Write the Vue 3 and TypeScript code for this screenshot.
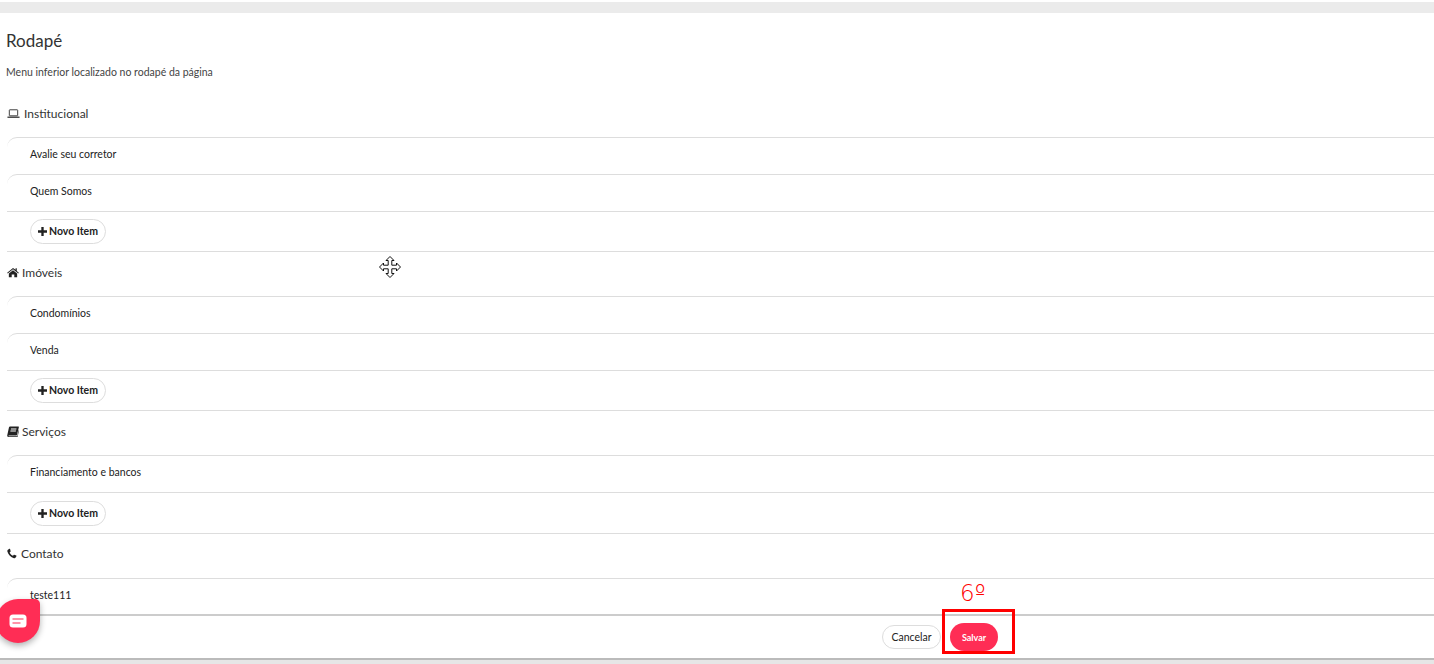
<script setup lang="ts">
interface FooterSection {
  title: string
  icon: 'laptop' | 'home' | 'book' | 'phone'
  items: string[]
  hasButton: boolean
}

const sections: FooterSection[] = [
  { title: 'Institucional', icon: 'laptop', items: ['Avalie seu corretor', 'Quem Somos'], hasButton: true },
  { title: 'Imóveis', icon: 'home', items: ['Condomínios', 'Venda'], hasButton: true },
  { title: 'Serviços', icon: 'book', items: ['Financiamento e bancos'], hasButton: true },
  { title: 'Contato', icon: 'phone', items: ['teste111'], hasButton: false },
]
</script>

<template>
  <div class="page">
    <div class="top-strip"></div>
    <main class="content">
      <h2 class="title">Rodapé</h2>
      <p class="subtitle">Menu inferior localizado no rodapé da página</p>

      <section v-for="section in sections" :key="section.title" class="section">
        <h3 class="section-title">
          <svg v-if="section.icon === 'laptop'" class="icon laptop" viewBox="0 0 14 11" fill="none" stroke="#333" stroke-width="1">
            <rect x="2.5" y="1.5" width="9" height="6.5" rx="0.5" />
            <path d="M0.5 9.5h13" stroke-width="1.4" />
          </svg>
          <svg v-else-if="section.icon === 'home'" class="icon" viewBox="0 0 13 11" fill="#222">
            <path d="M6.5 0.6 0.2 5.8l0.6 0.7L6.5 1.9l5.7 4.6 0.6-0.7-2.2-1.8V1H9.3v1.4z" />
            <path d="M6.5 3 2 6.6V10.6h3.1V7.6h2.8v3H11V6.6z" />
          </svg>
          <svg v-else-if="section.icon === 'book'" class="icon" viewBox="0 0 12 11" fill="#222">
            <path d="M3 0.4h8.4c.4 0 .6.3.5.7L10 9c-.1.3-.3.5-.7.5H2.2c-.6 0-.9.4-.6.7h8.7l1.2-6 .5.3-1.4 6.4H1.5C.5 10.9 0 10 .3 8.9L2 1.2C2.2.7 2.5.4 3 .4zM4 2.6l-.2.8h5.5l.2-.8zM3.5 4.6l-.2.8h5.5l.2-.8z" fill-rule="evenodd" />
          </svg>
          <svg v-else class="icon phone" viewBox="0 0 11 11" fill="#222">
            <path d="M2.7 0.4 1 1.3C.4 1.7.2 2.4.4 3.2c1 3.4 3.8 6.4 7.3 7.4.7.2 1.4 0 1.8-.6l.9-1.5c.1-.3 0-.6-.2-.7L8 7c-.3-.1-.5 0-.7.2l-.7.9c-1.7-.7-3-2-3.7-3.7l.9-.8c.2-.2.3-.4.2-.7L3.4.6C3.3.4 3 .3 2.7.4z" />
          </svg>
          <span>{{ section.title }}</span>
        </h3>
        <ul class="items">
          <li v-for="item in section.items" :key="item" class="item">{{ item }}</li>
        </ul>
        <div v-if="section.hasButton" class="new-row">
          <button class="pill new-item" type="button">
            <svg class="plus" viewBox="0 0 10 10" fill="#222"><path d="M3.7 0h2.6v3.7H10v2.6H6.3V10H3.7V6.300H0V3.700h3.700z" /></svg>
            Novo Item
          </button>
        </div>
      </section>
    </main>

    <footer class="actions">
      <button class="pill cancel" type="button">Cancelar</button>
      <button class="pill save" type="button">Salvar</button>
    </footer>
    <div class="bottom-strip"></div>

    <button class="chat" type="button" aria-label="Chat">
      <svg viewBox="0 0 18 14" width="18" height="14">
        <rect x="0.5" y="0.5" width="17" height="13" rx="3.5" fill="#fff" />
        <path d="M3.5 5h11M3.5 9h8" stroke="#ff2d55" stroke-width="1.2" />
      </svg>
    </button>

    <div class="mark"></div>
    <span class="mark-label">6º</span>

    <svg class="cursor" viewBox="0 0 24 24" width="24" height="24" fill="#fff" stroke="#111" stroke-width="1">
      <path d="M12 1.5 16 5.5H13.8V10.2H18.5V8L22.5 12 18.5 16V13.8H13.8V18.5H16L12 22.5 8 18.5H10.2V13.8H5.5V16L1.5 12 5.5 8V10.2H10.2V5.5H8Z" />
    </svg>
  </div>
</template>

<style scoped>
.page {
  position: relative;
  height: 664px;
  display: flex;
  flex-direction: column;
  overflow: hidden;
  background: #fff;
  color: #333;
  font-family: Lato, "Liberation Sans", sans-serif;
}

.top-strip {
  flex: none;
  height: 11px;
  margin-top: 2px;
  background: #ebebeb;
}

.content {
  flex: 1;
  min-height: 0;
  overflow: hidden;
  padding-left: 7px;
}

.title {
  margin: 18px 0 0 -1px;
  font-size: 17px;
  line-height: 20px;
  font-weight: 400;
  color: #333;
}

.subtitle {
  margin: 13px 0 0 -1px;
  font-size: 10.5px;
  line-height: 16px;
  color: #444;
}

.section {
  border-bottom: 1px solid #ddd;
}

.section:first-of-type {
  margin-top: 13px;
}

.section:last-of-type {
  border-bottom: 0;
}

.section-title {
  display: flex;
  align-items: center;
  gap: 4px;
  height: 44px;
  box-sizing: border-box;
  padding-bottom: 4px;
  margin: 0;
  font-size: 12px;
  font-weight: 400;
  color: #333;
}

.section:last-of-type .section-title {
  padding-bottom: 6px;
}

.icon {
  width: 12px;
  height: 11px;
  flex: none;
  margin-right: -1px;
}

.laptop {
  width: 13px;
  margin-right: 0;
}

.phone {
  width: 10px;
  margin-right: 0;
}

.items {
  margin: 0;
  padding: 0;
  list-style: none;
}

.item {
  height: 37px;
  box-sizing: border-box;
  padding-left: 23px;
  border-top: 1px solid #ddd;
  border-top-left-radius: 10px;
  font-size: 10.5px;
  line-height: 33px;
  color: #222;
}

.new-row {
  display: flex;
  align-items: center;
  height: 39px;
  padding-left: 23px;
  border-top: 1px solid #ddd;
}

.pill {
  box-sizing: border-box;
  border-radius: 13px;
  font-family: inherit;
  white-space: nowrap;
}

.new-item {
  display: flex;
  align-items: center;
  gap: 2px;
  width: 76px;
  height: 25px;
  margin-bottom: 1px;
  padding: 0 0 0 7px;
  border: 1px solid #ddd;
  background: #fff;
  font-size: 10.5px;
  font-weight: 700;
  color: #222;
}

.section:nth-of-type(3) .new-row {
  height: 40px;
}

.section:nth-of-type(3) .new-item {
  margin-bottom: 0;
}

.plus {
  width: 9px;
  height: 9px;
}

.actions {
  flex: none;
  display: flex;
  justify-content: flex-end;
  align-items: center;
  gap: 9px;
  height: 44px;
  box-sizing: border-box;
  padding-right: 436px;
  border-top: 2px solid #ccc;
  background: #fff;
}

.cancel {
  width: 59px;
  height: 24px;
  padding: 0;
  border: 1px solid #ddd;
  background: #fff;
  font-size: 10.5px;
  color: #222;
}

.save {
  width: 48px;
  height: 28px;
  padding: 0;
  border: 0;
  border-radius: 14px;
  background: #ff2d55;
  color: #fff;
  font-size: 9px;
  font-weight: 700;
}

.bottom-strip {
  flex: none;
  height: 4px;
  border-top: 2px solid #bbb;
  background: #e6e6e6;
}

.chat {
  position: absolute;
  left: -4px;
  top: 599px;
  width: 44px;
  height: 44px;
  display: flex;
  align-items: center;
  justify-content: center;
  padding: 0;
  border: 0;
  border-radius: 22px 5px 22px 22px;
  background: #ff2d55;
  box-shadow: 0 3px 6px rgba(0, 0, 0, 0.3);
}

.mark {
  position: absolute;
  left: 942px;
  top: 609px;
  width: 73px;
  height: 45px;
  box-sizing: border-box;
  border: 3px solid #f00;
}

.mark-label {
  position: absolute;
  left: 960px;
  top: 578px;
  font-family: "DejaVu Sans", sans-serif;
  font-weight: 200;
  font-size: 23px;
  line-height: 30px;
  color: #f00;
}

.cursor {
  position: absolute;
  left: 378px;
  top: 255px;
}
</style>
